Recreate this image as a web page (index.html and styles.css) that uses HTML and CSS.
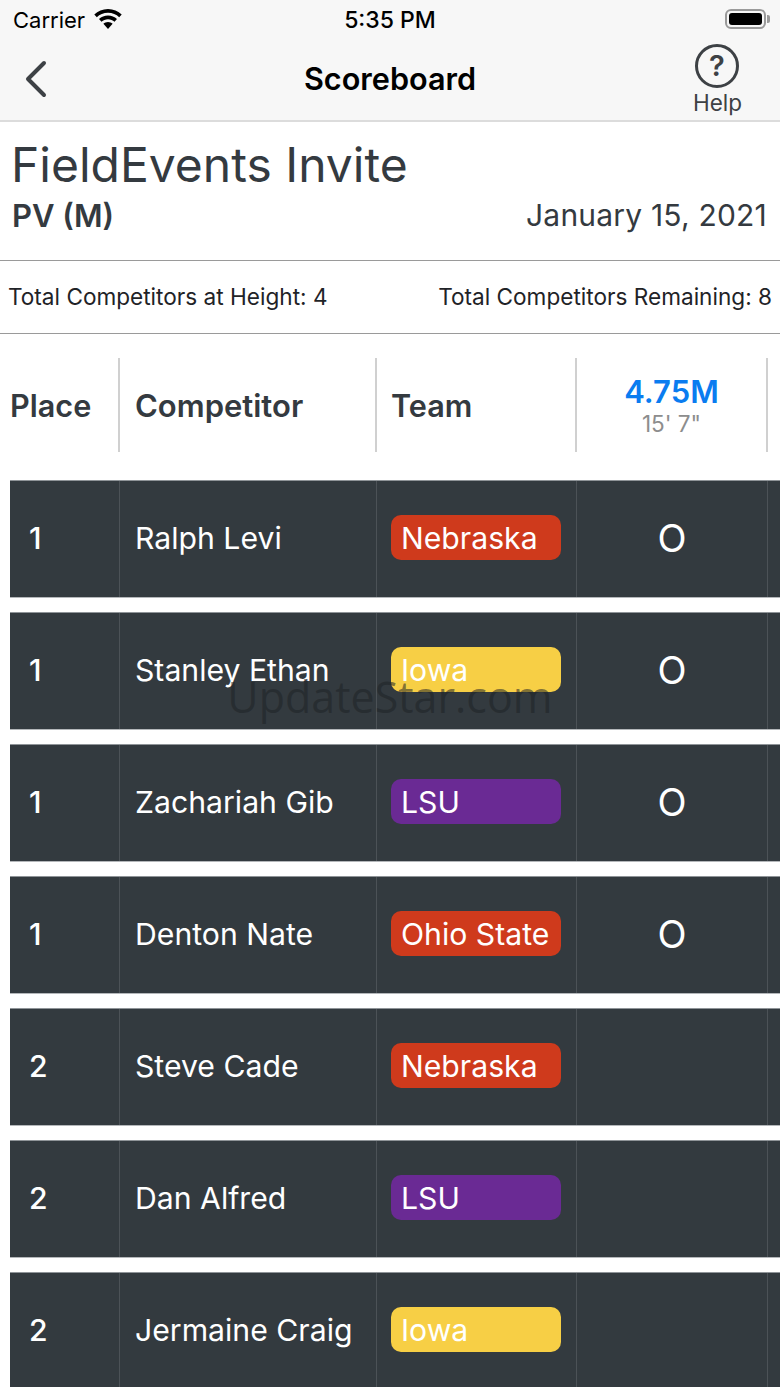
FILE: index.html
```html
<!DOCTYPE html>
<html lang="en">
<head>
<meta charset="utf-8">
<title>Scoreboard</title>
<link rel="stylesheet" href="styles.css">
</head>
<body>
<div class="topbar">
  <div class="status">
    <div class="status-left">
      <span>Carrier</span>
      <svg class="wifi" viewBox="0 0 28 20" width="28" height="20"><path d="M14 0C8.600 0 3.800 2.100.3 5.500l2.500 2.700C5.700 5.400 9.600 3.700 14 3.700s8.300 1.700 11.200 4.500l2.500-2.700C24.200 2.100 19.400 0 14 0z" fill="#000"/><path d="M14 6.500c-3.500 0-6.700 1.400-9 3.600l2.500 2.700c1.700-1.600 4-2.600 6.500-2.600s4.800 1 6.500 2.600l2.500-2.700c-2.300-2.200-5.500-3.600-9-3.600z" fill="#000"/><path d="M14 13c-1.800 0-3.400.7-4.600 1.800L14 20l4.600-5.200C17.400 13.700 15.800 13 14 13z" fill="#000"/></svg>
    </div>
    <div class="status-time">5:35 PM</div>
    <div class="battery"><span class="battery-fill"></span></div>
  </div>
  <div class="nav">
    <svg class="back" viewBox="0 0 24 38" width="24" height="38"><path d="M21 3 L5 19 L21 35" fill="none" stroke="#3d4145" stroke-width="4" stroke-linecap="round" stroke-linejoin="round"/></svg>
    <div class="nav-title">Scoreboard</div>
    <div class="help">
      <svg viewBox="0 0 46 46" width="46" height="46"><circle cx="23" cy="23" r="20.500" fill="none" stroke="#3d4145" stroke-width="3"/><text x="23" y="33" text-anchor="middle" class="help-mark">?</text></svg>
      <span>Help</span>
    </div>
  </div>
</div>

<div class="meet">
  <h1>FieldEvents Invite</h1>
  <div class="meet-sub">
    <strong>PV (M)</strong>
    <span>January 15, 2021</span>
  </div>
</div>

<div class="totals">
  <span>Total Competitors at Height: 4</span>
  <span>Total Competitors Remaining: 8</span>
</div>

<div class="board">
  <div class="head">
    <div class="cell c-place">Place</div>
    <div class="cell c-name">Competitor</div>
    <div class="cell c-team">Team</div>
    <div class="cell c-height"><b>4.75M</b><small>15' 7"</small></div>
  </div>

  <div class="row">
    <div class="cell c-place">1</div>
    <div class="cell c-name">Ralph Levi</div>
    <div class="cell c-team"><span class="tag red">Nebraska</span></div>
    <div class="cell c-height">O</div>
  </div>
  <div class="row">
    <div class="cell c-place">1</div>
    <div class="cell c-name">Stanley Ethan</div>
    <div class="cell c-team"><span class="tag yellow">Iowa</span></div>
    <div class="cell c-height">O</div>
  </div>
  <div class="row">
    <div class="cell c-place">1</div>
    <div class="cell c-name">Zachariah Gib</div>
    <div class="cell c-team"><span class="tag purple">LSU</span></div>
    <div class="cell c-height">O</div>
  </div>
  <div class="row">
    <div class="cell c-place">1</div>
    <div class="cell c-name">Denton Nate</div>
    <div class="cell c-team"><span class="tag red">Ohio State</span></div>
    <div class="cell c-height">O</div>
  </div>
  <div class="row">
    <div class="cell c-place">2</div>
    <div class="cell c-name">Steve Cade</div>
    <div class="cell c-team"><span class="tag red">Nebraska</span></div>
    <div class="cell c-height"></div>
  </div>
  <div class="row">
    <div class="cell c-place">2</div>
    <div class="cell c-name">Dan Alfred</div>
    <div class="cell c-team"><span class="tag purple">LSU</span></div>
    <div class="cell c-height"></div>
  </div>
  <div class="row">
    <div class="cell c-place">2</div>
    <div class="cell c-name">Jermaine Craig</div>
    <div class="cell c-team"><span class="tag yellow">Iowa</span></div>
    <div class="cell c-height"></div>
  </div>
</div>

<div class="watermark">UpdateStar.com</div>
</body>
</html>
```
FILE: styles.css
```css
* { box-sizing: border-box; }
html, body { margin: 0; height: 1387px; overflow: hidden; background: #fff; }
body { position: relative; font-family: Inter, "Liberation Sans", sans-serif; color: #343a40; }

.topbar { height: 122px; background: #f7f7f7; border-bottom: 2px solid #dcdcdc; padding-top: 4px; }
.status { height: 32px; display: flex; align-items: center; justify-content: space-between; padding: 0 14px 0 13px; position: relative; color: #000; font-size: 22px; }
.status-left { display: flex; align-items: center; gap: 9px; }
.wifi { margin-top: -3px; }
.status-time { position: absolute; left: 0; right: 0; text-align: center; font-size: 23px; font-weight: 500; }
.battery { position: relative; width: 41px; height: 20px; border: 2px solid #9a9a9a; border-radius: 6px; padding: 2px; margin-top: -2px; }
.battery::after { content: ""; position: absolute; right: -6px; top: 4px; width: 3px; height: 8px; border-radius: 0 2px 2px 0; background: #9a9a9a; }
.battery-fill { display: block; height: 100%; background: #000; border-radius: 3px; }

.nav { position: relative; height: 84px; display: flex; align-items: center; justify-content: space-between; padding: 0 38px 0 23px; }
.nav-title { position: absolute; left: 0; right: 0; text-align: center; top: 24px; font-size: 30.600px; font-weight: 600; color: #000; }
.back { margin-top: 2px; }
.help { display: flex; flex-direction: column; align-items: center; font-size: 22.500px; color: #3d4145; margin-top: 2px; }
.help svg { display: block; }
.help-mark { font-family: Inter, "Liberation Sans", sans-serif; font-size: 29px; font-weight: 600; fill: #3d4145; }

.meet { height: 139px; padding: 13px 13px 0 11px; border-bottom: 1px solid #9a9a9a; }
.meet h1 { margin: 0; font-size: 48px; font-weight: 400; line-height: 60px; color: #343a40; }
.meet-sub { display: flex; justify-content: space-between; align-items: center; line-height: 40px; margin-top: -1px; }
.meet-sub strong { font-size: 31px; font-weight: 600; margin: 2px 0 0 1px; }
.meet-sub span { font-size: 30px; font-weight: 400; letter-spacing: .2px; }

.totals { height: 73px; display: flex; align-items: center; justify-content: space-between; padding: 0 8px 2px; border-bottom: 1px solid #9a9a9a; font-size: 22.600px; color: #1f2327; }

.board { padding: 24px 0 0 10px; width: 800px; }
.head, .row { display: grid; grid-template-columns: 110px 257px 200px 191px 40px; }
.head { height: 94px; margin-bottom: 28px; }
.head .cell { height: 94px; border-right: 2px solid #d0d0d0; display: flex; align-items: center; font-size: 30.600px; font-weight: 600; }
.head .c-name { padding-left: 15px; font-size: 31px; }
.head .c-team { padding-left: 14px; }
.head .c-height { flex-direction: column; justify-content: center; padding-top: 2px; font-weight: 400; line-height: 1; }
.head b { font-size: 31px; font-weight: 600; color: #0a7cf0; }
.head small { font-size: 22.500px; color: #8d8d8d; margin-top: 6px; }

.row { height: 118px; margin-bottom: 14px; background: #333a3f; color: #fff; font-size: 30.200px; border-top: 1px solid #8f9498; border-bottom: 1px solid #b4b7ba; }
.row .cell { display: flex; align-items: center; border-right: 1px solid #4c5257; padding-bottom: 3px; }
.row .c-place { padding-left: 19px; font-weight: 500; }
.row .c-name { padding-left: 15px; }
.row .c-team { padding-left: 14px; }
.row .c-height { justify-content: center; font-size: 38px; }

.tag { width: 170px; height: 45px; border-radius: 10px; display: flex; align-items: center; padding: 1px 0 0 10px; margin-bottom: 1px; color: #fff; }
.red { background: #cf3a1c; }
.yellow { background: #f7cf45; }
.purple { background: #6a2a94; }

.watermark { position: absolute; left: 0; right: 0; top: 667px; text-align: center; font-family: "Open Sans", "Liberation Sans", sans-serif; font-size: 43px; color: rgba(30, 34, 38, .55); }
```
